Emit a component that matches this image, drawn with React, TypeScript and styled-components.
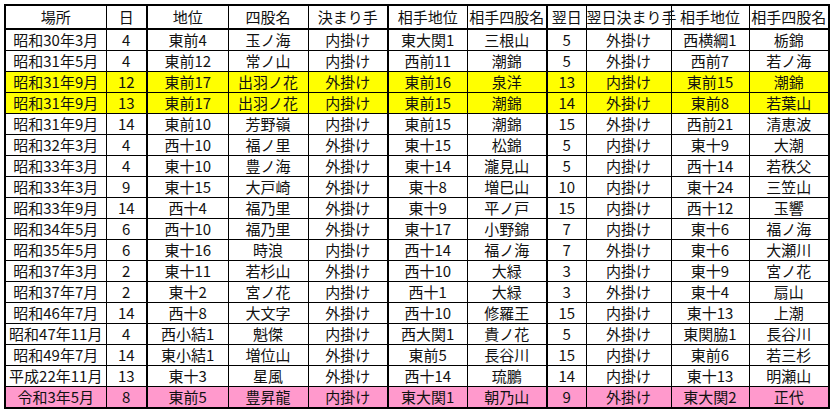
import React from 'react';
import styled, { createGlobalStyle } from 'styled-components';

const GlobalStyle = createGlobalStyle`
	html, body {
		margin: 0;
		padding: 0;
		background: #ffffff;
	}
	body {
		font-family: "Noto Sans CJK JP", "Noto Sans", sans-serif;
		color: #111111;
	}
`;

const Page = styled.div`
	padding: 4px 0 0 4px;
`;

const Table = styled.table`
	border-collapse: collapse;
	table-layout: fixed;
	width: 824px;
	border: 2px solid #000000;
	font-size: 15px;
`;

type RowKind = 'plain' | 'yellow' | 'pink';

const rowColors: Record<RowKind, string> = {
	plain: '#ffffff',
	yellow: '#ffff00',
	pink: '#ff99cc',
};

const HeadRow = styled.tr`
	height: 24px;
	border-bottom: 2px solid #000000;
`;

const Row = styled.tr<{ $kind: RowKind }>`
	height: 21px;
	background: ${(p) => rowColors[p.$kind]};
`;

const Cell = styled.td<{ $thick?: boolean }>`
	padding: 0;
	text-align: center;
	white-space: nowrap;
	overflow: visible;
	line-height: 20px;
	border-top: 1px solid #000000;
	border-bottom: 1px solid #000000;
	border-left: 1px solid #000000;
	border-right: ${(p) => (p.$thick ? '2px' : '1px')} solid #000000;
`;

const HeadCell = styled(Cell).attrs({ as: 'th' })`
	font-weight: 400;
`;

// column widths, measured border to border
const widths = [101, 41, 81, 80, 80, 79, 80, 39, 85, 78, 80];
// a heavier rule sits after these columns
const thickAfter = [1, 4, 6];

const headers = [
	'場所', '日', '地位', '四股名', '決まり手', '相手地位',
	'相手四股名', '翌日', '翌日決まり手', '相手地位', '相手四股名',
];

const rows: { kind: RowKind; cells: string[] }[] = [
	{ kind: 'plain', cells: ['昭和30年3月', '4', '東前4', '玉ノ海', '内掛け', '東大関1', '三根山', '5', '外掛け', '西横綱1', '栃錦'] },
	{ kind: 'plain', cells: ['昭和31年5月', '4', '東前12', '常ノ山', '内掛け', '西前11', '潮錦', '5', '外掛け', '西前7', '若ノ海'] },
	{ kind: 'yellow', cells: ['昭和31年9月', '12', '東前17', '出羽ノ花', '外掛け', '東前16', '泉洋', '13', '内掛け', '東前15', '潮錦'] },
	{ kind: 'yellow', cells: ['昭和31年9月', '13', '東前17', '出羽ノ花', '内掛け', '東前15', '潮錦', '14', '外掛け', '東前8', '若葉山'] },
	{ kind: 'plain', cells: ['昭和31年9月', '14', '東前10', '芳野嶺', '内掛け', '東前15', '潮錦', '15', '外掛け', '西前21', '清恵波'] },
	{ kind: 'plain', cells: ['昭和32年3月', '4', '西十10', '福ノ里', '外掛け', '東十15', '松錦', '5', '内掛け', '東十9', '大潮'] },
	{ kind: 'plain', cells: ['昭和33年3月', '4', '東十10', '豊ノ海', '外掛け', '東十14', '瀧見山', '5', '内掛け', '西十14', '若秩父'] },
	{ kind: 'plain', cells: ['昭和33年3月', '9', '東十15', '大戸崎', '外掛け', '東十8', '増巳山', '10', '内掛け', '東十24', '三笠山'] },
	{ kind: 'plain', cells: ['昭和33年9月', '14', '西十4', '福乃里', '外掛け', '東十9', '平ノ戸', '15', '内掛け', '西十12', '玉響'] },
	{ kind: 'plain', cells: ['昭和34年5月', '6', '西十10', '福乃里', '外掛け', '東十17', '小野錦', '7', '内掛け', '東十6', '福ノ海'] },
	{ kind: 'plain', cells: ['昭和35年5月', '6', '東十16', '時浪', '内掛け', '西十14', '福ノ海', '7', '外掛け', '東十6', '大瀬川'] },
	{ kind: 'plain', cells: ['昭和37年3月', '2', '東十11', '若杉山', '外掛け', '西十10', '大緑', '3', '内掛け', '東十9', '宮ノ花'] },
	{ kind: 'plain', cells: ['昭和37年7月', '2', '東十2', '宮ノ花', '内掛け', '西十1', '大緑', '3', '外掛け', '東十4', '扇山'] },
	{ kind: 'plain', cells: ['昭和46年7月', '14', '西十8', '大文字', '外掛け', '西十10', '修羅王', '15', '内掛け', '東十13', '上潮'] },
	{ kind: 'plain', cells: ['昭和47年11月', '4', '西小結1', '魁傑', '内掛け', '西大関1', '貴ノ花', '5', '外掛け', '東関脇1', '長谷川'] },
	{ kind: 'plain', cells: ['昭和49年7月', '14', '東小結1', '増位山', '外掛け', '東前5', '長谷川', '15', '内掛け', '東前6', '若三杉'] },
	{ kind: 'plain', cells: ['平成22年11月', '13', '東十3', '星風', '外掛け', '西十14', '琉鵬', '14', '内掛け', '東十13', '明瀬山'] },
	{ kind: 'pink', cells: ['令和3年5月', '8', '東前5', '豊昇龍', '内掛け', '東大関1', '朝乃山', '9', '外掛け', '東大関2', '正代'] },
];

const App: React.FC = () => {
	return (
		<React.Fragment>
			<GlobalStyle />
			<Page>
				<Table>
					<colgroup>
						{widths.map((w, i) => (
							<col key={i} width={w} />
						))}
					</colgroup>
					<thead>
						<HeadRow>
							{headers.map((h, i) => (
								<HeadCell key={i} $thick={thickAfter.includes(i)}>
									{h}
								</HeadCell>
							))}
						</HeadRow>
					</thead>
					<tbody>
						{rows.map((r, ri) => (
							<Row key={ri} $kind={r.kind}>
								{r.cells.map((c, ci) => (
									<Cell key={ci} $thick={thickAfter.includes(ci)}>
										{c}
									</Cell>
								))}
							</Row>
						))}
					</tbody>
				</Table>
			</Page>
		</React.Fragment>
	);
};

export default App;
